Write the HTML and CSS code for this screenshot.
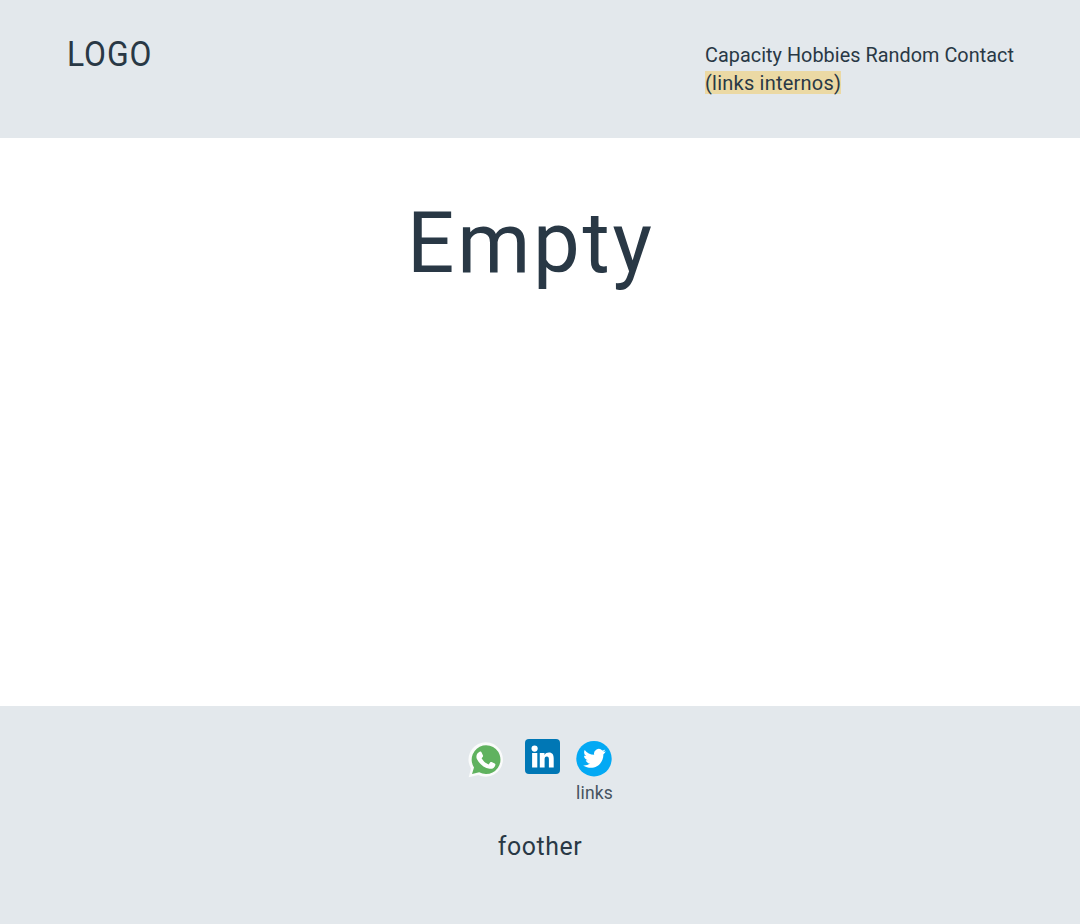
FILE: index.html
```html
<!DOCTYPE html>
<html lang="en">
<head>
<meta charset="utf-8">
<title>Empty</title>
<link rel="stylesheet" href="styles.css">
</head>
<body>
<div class="page">
  <header class="header">
    <div class="logo"><span class="logo-text">LOGO</span></div>
    <nav class="nav">
      <div class="nav-links"><span>Capacity</span> <span>Hobbies</span> <span>Random</span> <span>Contact</span></div>
      <div class="nav-note"><mark class="mark">(links internos)</mark></div>
    </nav>
  </header>
  <main class="main"><h1 class="title">Empty</h1></main>
  <footer class="footer">
    <div class="social">
      <svg class="icon whatsapp" viewBox="0 0 36 36">
        <path fill="#fafbfb" d="M.7 35.3 3 26.4A17.2 17.2 0 1 1 10.300 33z"/>
        <path fill="#60b25f" d="M4 32.100 6 25.500A14.400 14.400 0 1 1 11.200 30.300z"/>
        <path fill="#fff" d="M11.600 9.800c.8-.4 1.600-.3 2 .6l1.400 3.200c.3.8-.2 1.300-1.400 2.700 1.700 3 3.900 4.900 7 6.100l1.700-2.100c.4-.5.8-.5 1.300-.2l3.100 1.500c.8.400.8.700.6 1.600-.6 2.600-3.100 4-5.700 3.600-5.700-.9-10.700-5.300-12.700-9.800-1.200-2.800-.2-5.800 2.700-7.200z"/>
      </svg>
      <svg class="icon linkedin" viewBox="0 0 35 35">
        <rect width="35" height="35" rx="4" fill="#0077b5"/>
        <circle cx="9.600" cy="9.600" r="3.100" fill="#fff"/>
        <path fill="#fff" d="M7.100 14h5.200v14.500H7.100zM14.800 14h4.700v2c1-1.600 2.500-2.400 4.500-2.400 3.400 0 4.700 2.300 4.700 6v8.900h-4.800v-8c0-2.100-.5-3-2.100-3-1.700 0-2.200 1.200-2.200 3.100v7.900h-4.800z"/>
      </svg>
      <div class="twitter-link">
        <svg class="icon" viewBox="0 0 36 36">
          <circle cx="18" cy="17.700" r="17.700" fill="#03a9f4"/>
          <path fill="#fff" d="M29.800 10.200c-.8.4-1.700.6-2.600.7.9-.6 1.600-1.500 2-2.500-.9.500-1.900.9-2.900 1.100a4.700 4.700 0 0 0-8.100 4.300c-3.900-.2-7.300-2-9.500-4.900-1.100 2-.6 4.700 1.400 6.200-.8 0-1.500-.2-2.100-.6 0 2.300 1.600 4.200 3.800 4.700-.7.200-1.400.2-2.100.1.600 1.900 2.300 3.200 4.300 3.300-2 1.500-4.400 2.200-6.900 1.900 9.800 6 20.500-.4 20.300-11.300 1-.8 1.800-1.700 2.400-3z"/>
        </svg>
        <span class="caption">links</span>
      </div>
    </div>
    <div class="footer-text">foother</div>
  </footer>
</div>
</body>
</html>
```
FILE: styles.css
```css
body { margin: 0; background: #fff; color: #293845; font-family: Roboto, "Liberation Sans", sans-serif; }
.page { display: flex; flex-direction: column; height: 924px; overflow: hidden; }
.header { box-sizing: border-box; height: 138px; flex: none; display: flex; justify-content: space-between; align-items: flex-start; padding: 35px 0 0 67px; background: #e3e8ec; }
.logo { font-size: 35px; line-height: 40px; }
.logo-text { display: inline-block; letter-spacing: 1px; transform: scaleX(.91); transform-origin: left; }
.nav { width: 375px; padding-top: 6px; font-size: 21px; line-height: 28px; white-space: nowrap; }
.nav-links { letter-spacing: .05px; transform: scaleX(.943); transform-origin: left; }
.nav-note { letter-spacing: .25px; }
.mark { display: inline-block; height: 23px; line-height: 25px; margin-top: 1px; background: #ebd9a4; color: inherit; transform: scaleX(.951); transform-origin: left; }
.main { flex: 1; padding-top: 55px; }
.title { width: 260px; margin: 0 0 0 407px; font-size: 86px; line-height: 100px; font-weight: 400; letter-spacing: 2.8px; transform: scaleX(.97); transform-origin: left; }
.footer { box-sizing: border-box; height: 218px; flex: none; background: #e3e8ec; padding-top: 33px; }
.social { display: flex; align-items: flex-start; height: 92px; padding-left: 468px; }
.icon { display: block; width: 36px; height: 36px; flex: none; }
.whatsapp { margin: 3px 21px 0 0; }
.linkedin { width: 35px; height: 35px; margin-right: 16px; }
.twitter-link { padding-top: 2px; width: 50px; }
.caption { display: block; margin-top: 6px; font-size: 17.500px; line-height: 20px; color: #465360; letter-spacing: .2px; }
.footer-text { text-align: center; font-size: 26px; line-height: 30px; letter-spacing: .6px; transform: scaleX(.955); }
```
